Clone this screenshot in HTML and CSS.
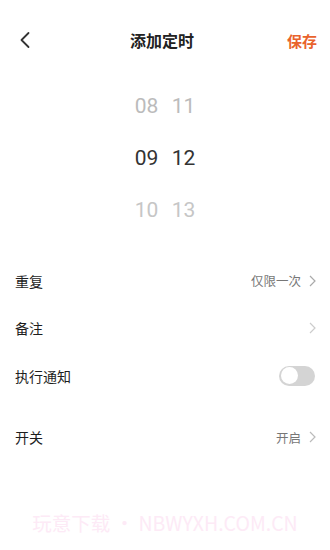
FILE: index.html
```html
<!DOCTYPE html>
<html lang="zh-CN">
<head>
<meta charset="utf-8">
<title>添加定时</title>
<link rel="stylesheet" href="styles.css">
</head>
<body>
<div class="page">
  <header class="header">
    <div class="back">
      <svg width="12" height="18" viewBox="0 0 12 18"><path d="M9.5 2 L2.5 9 L9.5 16" fill="none" stroke="#333" stroke-width="1.8" stroke-linecap="round" stroke-linejoin="round"/></svg>
    </div>
    <div class="title">添加定时</div>
    <div class="save">保存</div>
  </header>

  <div class="picker">
    <div class="prow dim1"><span class="cell">08</span><span class="cell">11</span></div>
    <div class="prow sel"><span class="cell">09</span><span class="cell">12</span></div>
    <div class="prow dim2"><span class="cell">10</span><span class="cell">13</span></div>
  </div>

  <div class="list">
    <div class="row">
      <span class="label">重复</span>
      <span class="right"><span class="value">仅限一次</span><svg class="chev" width="7" height="12" viewBox="0 0 7 12"><path d="M1 1 L6 6 L1 11" fill="none" stroke="#aaa" stroke-width="1.2"/></svg></span>
    </div>
    <div class="row">
      <span class="label">备注</span>
      <span class="right"><svg class="chev" width="7" height="12" viewBox="0 0 7 12"><path d="M1 1 L6 6 L1 11" fill="none" stroke="#ccc" stroke-width="1.2"/></svg></span>
    </div>
    <div class="row">
      <span class="label">执行通知</span>
      <span class="toggle"><span class="knob"></span></span>
    </div>
  </div>

  <div class="list second">
    <div class="row">
      <span class="label">开关</span>
      <span class="right"><span class="value">开启</span><svg class="chev" width="7" height="12" viewBox="0 0 7 12"><path d="M1 1 L6 6 L1 11" fill="none" stroke="#bbb" stroke-width="1.2"/></svg></span>
    </div>
  </div>

  <div class="watermark">玩意下载 • NBWYXH.COM.CN</div>
</div>
</body>
</html>
```

FILE: styles.css
```css
html, body {
  margin: 0;
  padding: 0;
  background: #fff;
}
body {
  font-family: "Noto Sans CJK SC", "Noto Sans", Roboto, sans-serif;
  color: #222;
}
.page {
  width: 330px;
  height: 550px;
  display: flex;
  flex-direction: column;
}
.header {
  height: 80px;
  display: flex;
  align-items: center;
  justify-content: space-between;
  padding: 0 13px 0 19px;
}
.back {
  width: 12px;
  height: 18px;
  display: flex;
  align-items: center;
}
.title {
  font-size: 16px;
  font-weight: 700;
  color: #222;
  margin-left: 6px;
}
.save {
  font-size: 15px;
  font-weight: 700;
  color: #e9632c;
}
.picker {
  display: flex;
  flex-direction: column;
}
.prow {
  height: 52px;
  display: flex;
  justify-content: center;
  align-items: center;
  gap: 7px;
  font-family: Roboto, "Noto Sans", sans-serif;
  font-size: 21px;
}
.cell {
  width: 30px;
  text-align: center;
}
.dim1 { color: #bbbbbb; }
.sel { color: #333; }
.dim2 { color: #c6c6c6; }
.list {
  margin-top: 21px;
  display: flex;
  flex-direction: column;
}
.list.second {
  margin-top: 14px;
}
.row {
  height: 47.5px;
  display: flex;
  align-items: center;
  justify-content: space-between;
  padding: 0 14px 0 15px;
}
.label {
  font-size: 14px;
  color: #1e1e1e;
}
.right {
  display: flex;
  align-items: center;
  gap: 8px;
}
.value {
  font-size: 12.5px;
  color: #777;
}
.chev {
  display: block;
}
.toggle {
  width: 36px;
  height: 20px;
  border-radius: 10px;
  background: #d4d4d4;
  display: flex;
  align-items: center;
  padding: 0 2px;
  box-sizing: border-box;
  margin-right: 1px;
}
.knob {
  width: 17px;
  height: 17px;
  border-radius: 50%;
  background: #fff;
}
.watermark {
  margin-top: auto;
  margin-bottom: 13px;
  text-align: center;
  font-size: 19.5px;
  color: #fdeaf6;
  font-family: "Noto Sans CJK SC", "Liberation Sans", sans-serif;
}
```
